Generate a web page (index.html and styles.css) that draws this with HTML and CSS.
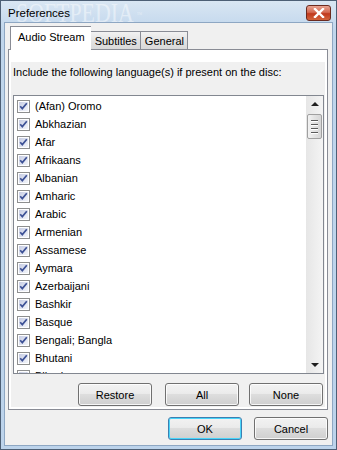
FILE: index.html
```html
<!DOCTYPE html>
<html lang="en">
<head>
  <meta charset="UTF-8">
  <title>Preferences</title>
  <link rel="stylesheet" href="styles.css">
</head>
<body>
  <div class="window">
    <div class="titlebar">
      <span class="title">Preferences</span>
      <span class="watermark">SOFTPEDIA<sup>™</sup></span>
      <div class="close">
        <svg width="14" height="10" viewBox="0 0 14 10">
          <path d="M3 1 L11 9 M11 1 L3 9" stroke="#fff" stroke-width="2.4" stroke-linecap="square"/>
        </svg>
      </div>
    </div>

    <div class="client">
      <div class="tabs">
        <div class="tab active">Audio Stream</div>
        <div class="tab">Subtitles</div>
        <div class="tab">General</div>
      </div>

      <div class="panel">
        <div class="page">
          <p class="label">Include the following language(s) if present on the disc:</p>
          <div class="listbox">
            <div class="items" id="items"></div>
            <div class="scrollbar">
              <div class="arrow up"></div>
              <div class="thumb"><span></span><span></span><span></span><span></span></div>
              <div class="track"></div>
              <div class="arrow down"></div>
            </div>
          </div>
          <div class="list-buttons">
            <button class="btn">Restore</button>
            <button class="btn btn-all">All</button>
            <button class="btn">None</button>
          </div>
        </div>
      </div>

      <div class="dialog-buttons">
        <button class="btn btn-default">OK</button>
        <button class="btn">Cancel</button>
      </div>
    </div>
  </div>

  <script>
    const idiomas = [
      "(Afan) Oromo", "Abkhazian", "Afar", "Afrikaans", "Albanian", "Amharic",
      "Arabic", "Armenian", "Assamese", "Aymara", "Azerbaijani", "Bashkir",
      "Basque", "Bengali; Bangla", "Bhutani", "Bihari"
    ];

    const check = `
      <svg class="check" width="13" height="13" viewBox="0 0 13 13">
        <defs>
          <linearGradient id="fondo" x1="0" y1="0" x2="1" y2="1">
            <stop offset="0" stop-color="#c6cce3"/>
            <stop offset="1" stop-color="#f4f6fb"/>
          </linearGradient>
        </defs>
        <rect x="0.5" y="0.5" width="12" height="12" fill="#fff" stroke="#8e8f8f"/>
        <rect x="2" y="2" width="9" height="9" fill="url(#fondo)"/>
        <path d="M3.2 6.2 L5.3 8.6 L9.8 3.2" fill="none" stroke="#3d5196" stroke-width="1.7"/>
      </svg>`;

    const lista = document.getElementById('items');
    idiomas.forEach(nombre => {
      const fila = document.createElement('div');
      fila.className = 'item';
      fila.innerHTML = check + `<span>${nombre}</span>`;
      lista.appendChild(fila);
    });
  </script>
</body>
</html>
```

FILE: styles.css
```css
body {
  margin: 0;
  font-family: 'Liberation Sans', Arial, sans-serif;
  font-size: 11px;
  color: #000;
}

.window {
  width: 337px;
  height: 450px;
  box-sizing: border-box;
  border: 1px solid #4d5f75;
  background: linear-gradient(#d9e6f3, #c0d6ec 30px, #bcd3eb);
  padding: 0 3px 3px 3px;
  display: flex;
  flex-direction: column;
  position: relative;
  overflow: hidden;
}

.titlebar {
  height: 22px;
  display: flex;
  align-items: center;
  position: relative;
}

.title {
  font-size: 11.5px;
  margin-left: 4px;
  margin-top: 2px;
  color: #000;
  position: relative;
  z-index: 1;
}

.watermark {
  position: absolute;
  left: 12px;
  top: -2px;
  font-family: 'Liberation Serif', serif;
  font-size: 28px;
  line-height: 28px;
  color: rgba(255, 255, 255, 0.45);
  transform: scaleX(0.78);
  transform-origin: left top;
  pointer-events: none;
}

.watermark sup {
  font-size: 7px;
  vertical-align: top;
  position: relative;
  top: 2px;
  margin-left: 4px;
}

.close {
  margin-left: auto;
  margin-right: 2px;
  margin-top: 3px;
  width: 25px;
  height: 16px;
  box-sizing: border-box;
  border: 1px solid #6b2a1f;
  border-radius: 3px;
  background: linear-gradient(#e8a493, #d46a52 45%, #c0391d 55%, #d2643c);
  display: flex;
  align-items: center;
  justify-content: center;
}

.client {
  flex: 1;
  background: #f0f0f0;
  border: 1px solid #8ea7c3;
  padding: 2px 4px 5px 3px;
  display: flex;
  flex-direction: column;
}

.tabs {
  display: flex;
  align-items: flex-end;
  height: 24px;
  padding-left: 2px;
  position: relative;
  z-index: 1;
}

.tab {
  height: 17px;
  line-height: 18px;
  padding: 0 3px 0 4px;
  border: 1px solid #898c95;
  border-bottom: none;
  background: linear-gradient(#f2f2f2, #e3e3e3 50%, #d9d9d9);
  margin-left: -1px;
  font-size: 11px;
}

.tab.active {
  height: 23px;
  line-height: 21px;
  padding: 0 6px 0 7px;
  background: #fff;
  margin-bottom: -1px;
  margin-left: 0;
  position: relative;
  z-index: 2;
  border-right: none;
}

.panel {
  height: 361px;
  box-sizing: border-box;
  border: 1px solid #898c95;
  background: #fff;
  padding: 12px 2px 2px 2px;
  display: flex;
}

.page {
  flex: 1;
  background: #f0f0f0;
  padding: 0 1px 0 2px;
  display: flex;
  flex-direction: column;
}

.label {
  margin: 3px 0 0 0;
  line-height: 14px;
  font-size: 11px;
}

.listbox {
  margin-top: 16px;
  height: 279px;
  box-sizing: border-box;
  border: 1px solid #828790;
  background: #fff;
  display: flex;
  overflow: hidden;
}

.items {
  flex: 1;
  padding-top: 1px;
  overflow: hidden;
}

.item {
  height: 18px;
  display: flex;
  align-items: center;
  padding-left: 3px;
  gap: 5px;
  font-size: 11px;
}

.check {
  flex: none;
}

.scrollbar {
  width: 17px;
  background: linear-gradient(90deg, #e6e6e6, #f4f4f4);
  display: flex;
  flex-direction: column;
  align-items: center;
}

.arrow {
  height: 16px;
  width: 17px;
  display: flex;
  align-items: center;
  justify-content: center;
}

.arrow::before {
  content: '';
  border-left: 4px solid transparent;
  border-right: 4px solid transparent;
}

.arrow.up::before {
  border-bottom: 4px solid #1f1f1f;
}

.arrow.down::before {
  border-top: 4px solid #1f1f1f;
}

.thumb {
  margin-top: 2px;
  width: 15px;
  height: 25px;
  box-sizing: border-box;
  border: 1px solid #a0a0a0;
  border-radius: 2px;
  background: linear-gradient(90deg, #f3f3f3, #e2e2e2 50%, #d6d6d6);
  display: flex;
  flex-direction: column;
  align-items: center;
  justify-content: center;
  gap: 2px;
}

.thumb span {
  width: 7px;
  height: 1px;
  background: #5a5a5a;
  border-bottom: 1px solid #fff;
}

.track {
  flex: 1;
}

.list-buttons {
  display: flex;
  justify-content: flex-end;
  margin-top: 9px;
  gap: 10px;
  padding-right: 1px;
}

.btn-all {
  margin-left: 3px;
}

.btn {
  width: 74px;
  height: 23px;
  box-sizing: border-box;
  border: 1px solid #707070;
  border-radius: 3px;
  background: linear-gradient(#f2f2f2, #ebebeb 45%, #dddddd 50%, #cfcfcf);
  box-shadow: inset 0 0 0 1px rgba(255, 255, 255, 0.8);
  font-family: 'Liberation Sans', Arial, sans-serif;
  font-size: 11px;
  color: #000;
  padding: 0;
}

.btn-default {
  border-color: #3c7fb1;
  box-shadow: inset 0 0 0 1px #48d4f9;
}

.dialog-buttons {
  display: flex;
  justify-content: flex-end;
  gap: 12px;
  margin-top: 7px;
}
```
